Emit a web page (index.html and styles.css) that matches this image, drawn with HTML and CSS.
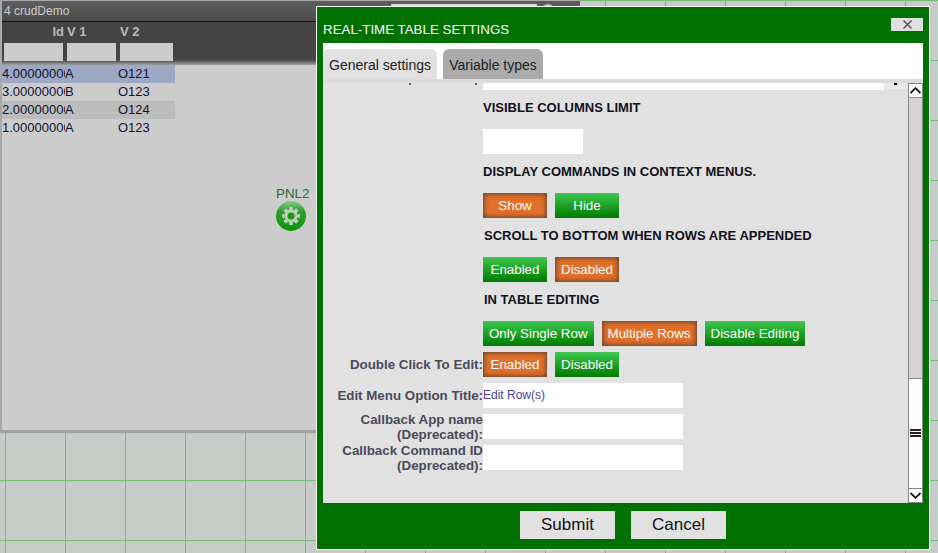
FILE: index.html
```html
<!DOCTYPE html>
<html lang="en">
<head>
    <meta charset="UTF-8">
    <title>crudDemo</title>
    <link rel="stylesheet" href="styles.css">
</head>
<body>
    <div class="app-window">
        <div class="app-title">
            <span class="app-name">4 crudDemo</span>
            <div class="title-field"></div>
            <div class="title-icon"></div>
        </div>
        <div class="table-head">
            <div class="head-cols">
                <div class="head-col col-id">Id</div>
                <div class="head-col col-v1">V 1</div>
                <div class="head-col col-v2">V 2</div>
            </div>
            <div class="head-filters">
                <div class="filter filter-id"></div>
                <div class="filter filter-v1"></div>
                <div class="filter filter-v2"></div>
            </div>
        </div>
        <div class="table-body">
            <div class="row row-selected"><span class="cell-id">4.0000000000</span><span class="cell-v1">A</span><span class="cell-v2">O121</span></div>
            <div class="row"><span class="cell-id">3.0000000000</span><span class="cell-v1">B</span><span class="cell-v2">O123</span></div>
            <div class="row row-alt"><span class="cell-id">2.0000000000</span><span class="cell-v1">A</span><span class="cell-v2">O124</span></div>
            <div class="row"><span class="cell-id">1.0000000000</span><span class="cell-v1">A</span><span class="cell-v2">O123</span></div>
        </div>
        <div class="panel-node">
            <div class="node-label">PNL2</div>
            <svg class="node-icon" width="30" height="30" viewBox="0 0 30 30">
                <defs>
                    <linearGradient id="nodeFill" x1="0" y1="0" x2="0" y2="1">
                        <stop offset="0" stop-color="#86cc86"/>
                        <stop offset="0.35" stop-color="#2c9f2c"/>
                        <stop offset="1" stop-color="#0a960a"/>
                    </linearGradient>
                </defs>
                <circle cx="15" cy="15" r="15" fill="url(#nodeFill)"/>
                <g fill="#bccdbc">
                    <rect x="13.2" y="6" width="3.6" height="18"/>
                    <rect x="13.2" y="6" width="3.6" height="18" transform="rotate(45 15 15)"/>
                    <rect x="13.2" y="6" width="3.6" height="18" transform="rotate(90 15 15)"/>
                    <rect x="13.2" y="6" width="3.6" height="18" transform="rotate(135 15 15)"/>
                </g>
                <circle cx="15" cy="15" r="6.4" fill="#bccdbc"/>
                <circle cx="15" cy="15" r="3.6" fill="#149a14"/>
            </svg>
        </div>
    </div>

    <div class="dialog">
        <div class="dialog-title">
            <span>REAL-TIME TABLE SETTINGS</span>
            <button class="close-btn">
                <svg width="9" height="9" viewBox="0 0 9 9"><path d="M0.5 0.5L8.5 8.5M8.5 0.5L0.5 8.5" stroke="#444" stroke-width="1.2" fill="none"/></svg>
            </button>
        </div>
        <div class="dialog-content">
            <div class="tabs">
                <div class="tab tab-active">General settings</div>
                <div class="tab">Variable types</div>
            </div>
            <div class="tab-line"></div>
            <div class="scroll-area">
                <div class="form">
                    <div class="speck speck-a"></div>
                    <div class="speck speck-b"></div>
                    <div class="cut-row">
                        <div class="cut-input"></div>
                        <div class="cut-end"><div class="cut-dot"></div></div>
                    </div>
                    <div class="section-title">VISIBLE COLUMNS LIMIT</div>
                    <div class="text-input small"></div>
                    <div class="section-title">DISPLAY COMMANDS IN CONTEXT MENUS.</div>
                    <div class="btn-row">
                        <div class="btn btn-on">Show</div>
                        <div class="btn">Hide</div>
                    </div>
                    <div class="section-title indented">SCROLL TO BOTTOM WHEN ROWS ARE APPENDED</div>
                    <div class="btn-row">
                        <div class="btn">Enabled</div>
                        <div class="btn btn-on">Disabled</div>
                    </div>
                    <div class="section-title indented">IN TABLE EDITING</div>
                    <div class="btn-row">
                        <div class="btn btn-wide">Only Single Row</div>
                        <div class="btn btn-on btn-wide">Multiple Rows</div>
                        <div class="btn btn-wide">Disable Editing</div>
                    </div>
                    <div class="field">
                        <label>Double Click To Edit:</label>
                        <div class="btn-row">
                            <div class="btn btn-on">Enabled</div>
                            <div class="btn">Disabled</div>
                        </div>
                    </div>
                    <div class="field">
                        <label>Edit Menu Option Title:</label>
                        <div class="text-input">Edit Row(s)</div>
                    </div>
                    <div class="field">
                        <label>Callback App name<br>(Deprecated):</label>
                        <div class="text-input"></div>
                    </div>
                    <div class="field">
                        <label>Callback Command ID<br>(Deprecated):</label>
                        <div class="text-input"></div>
                    </div>
                </div>
                <div class="scrollbar">
                    <div class="scroll-btn">
                        <svg width="11" height="7" viewBox="0 0 11 7"><path d="M0.5 6L5.5 1.2L10.5 6" stroke="#111" stroke-width="1.8" fill="none"/></svg>
                    </div>
                    <div class="scroll-track"></div>
                    <div class="scroll-thumb">
                        <div class="grip"></div>
                        <div class="grip"></div>
                        <div class="grip"></div>
                    </div>
                    <div class="scroll-btn">
                        <svg width="11" height="7" viewBox="0 0 11 7"><path d="M0.5 1L5.5 5.8L10.5 1" stroke="#111" stroke-width="1.8" fill="none"/></svg>
                    </div>
                </div>
            </div>
        </div>
        <div class="dialog-actions">
            <button class="action-btn">Submit</button>
            <button class="action-btn">Cancel</button>
        </div>
    </div>
</body>
</html>
```

FILE: styles.css
```css
html, body {
    margin: 0;
    height: 100%;
    overflow: hidden;
}
body {
    position: relative;
    font-family: "Liberation Sans", Arial, sans-serif;
    background-color: #c7ccc8;
    background-image:
        linear-gradient(to right, #78bb78 1px, transparent 1px),
        linear-gradient(to bottom, #78bb78 1px, transparent 1px);
    background-size: 60px 60px;
    background-position: 5px 0;
}

/* window behind the dialog */
.app-window {
    position: absolute;
    left: 0;
    top: 0;
    width: 578px;
    height: 429px;
    background: #cccccc;
    border-left: 2px solid #a8a8a8;
    border-top: 1px solid #a8a8a8;
    border-bottom: 3px solid #a0a0a0;
}
.app-title {
    display: flex;
    height: 20px;
    line-height: 20px;
    font-size: 12px;
    color: #cccccc;
    background: linear-gradient(#5e5e5e, #4c4c4c);
    border-bottom: 1px solid #111;
}
.app-name {
    width: 389px;
    padding-left: 2px;
    box-sizing: border-box;
}
.title-field {
    width: 146px;
    height: 14px;
    margin-top: 3px;
    background: #d8d8d8;
}
.title-icon {
    width: 14px;
    height: 14px;
    margin: 3px 0 0 4px;
    border-radius: 50%;
    background: #bbbbbb;
}
.table-head {
    height: 43px;
    background: linear-gradient(#444444 88%, #a0a0a0);
}
.head-cols {
    display: flex;
    height: 21px;
    line-height: 20px;
}
.head-col {
    font-size: 13px;
    font-weight: bold;
    color: #bbbbbb;
}
.col-id {
    width: 62px;
    text-align: right;
}
.col-v1 {
    width: 52px;
    padding-left: 3px;
    box-sizing: border-box;
}
.col-v2 {
    padding-left: 4px;
}
.head-filters {
    display: flex;
    gap: 4px;
    padding-left: 2px;
}
.filter {
    height: 18px;
    background: #cccccc;
}
.filter-id { width: 59px; }
.filter-v1 { width: 49px; }
.filter-v2 { width: 53px; }
.row {
    display: flex;
    width: 173px;
    height: 18px;
    line-height: 18px;
    font-size: 13px;
    color: #111133;
}
.row-selected { background: #9da8c5; }
.row-alt { background: #bcbcbc; }
.cell-id {
    width: 63px;
    overflow: hidden;
    white-space: nowrap;
}
.cell-v1 {
    width: 53px;
}
.panel-node {
    position: absolute;
    left: 274px;
    top: 184px;
    width: 36px;
}
.node-label {
    height: 16px;
    font-size: 13.33px;
    line-height: 18px;
    color: #2d6a2d;
}
.node-icon {
    display: block;
}

/* settings dialog */
.dialog {
    position: absolute;
    left: 316px;
    top: 6px;
    width: 600px;
    height: 542px;
    padding: 0 6px;
    background: #007000;
    border: 1px solid #ffffff;
    display: flex;
    flex-direction: column;
}
.dialog-title {
    height: 36px;
    flex: none;
    display: flex;
    align-items: flex-end;
    justify-content: space-between;
    color: #ffffff;
    font-size: 13.33px;
    line-height: 20px;
}
.dialog-title span {
    padding-bottom: 3px;
}
.close-btn {
    width: 32px;
    height: 13px;
    padding: 0;
    border: none;
    background: #e0e0e0;
    margin-bottom: 12px;
    display: flex;
    align-items: center;
    justify-content: center;
}
.dialog-content {
    height: 460px;
    flex: none;
    background: #e1e1e1;
    display: flex;
    flex-direction: column;
}
.tabs {
    display: flex;
    gap: 6px;
    height: 30px;
    padding-top: 6px;
    background: #ffffff;
}
.tab {
    width: 100px;
    height: 30px;
    line-height: 32px;
    text-align: center;
    font-size: 14px;
    color: #222;
    background: #aaaaaa;
    border-radius: 6px 6px 0 0;
}
.tab-active {
    width: 114px;
    background: #e1e1e1;
}
.tab-line {
    height: 4px;
    background: #dcdcdc;
}
.scroll-area {
    flex: 1;
    display: flex;
    min-height: 0;
}
.form {
    position: relative;
    flex: 1;
    padding-left: 160px;
    overflow: hidden;
}
.speck {
    position: absolute;
    top: 0;
    width: 2px;
    height: 2px;
    background: #4a6a90;
}
.speck-a { left: 86px; }
.speck-b { left: 152px; }
.cut-row {
    display: flex;
    height: 7px;
}
.cut-input {
    width: 401px;
    background: #ffffff;
}
.cut-end {
    width: 23px;
    height: 6px;
    background: #e9e9e9;
}
.cut-dot {
    width: 3px;
    height: 2px;
    margin-left: 10px;
    background: #000;
}
.section-title {
    font-size: 13px;
    font-weight: bold;
    color: #111122;
    line-height: 16px;
    margin: 10px 0 13px 0;
}
.section-title.indented {
    padding-left: 1px;
}
.text-input {
    width: 200px;
    height: 25px;
    line-height: 25px;
    background: #ffffff;
    font-size: 12px;
    color: #4a3fa0;
}
.text-input.small {
    width: 100px;
}
.btn-row {
    display: flex;
    gap: 8px;
}
.btn {
    width: 64px;
    height: 25px;
    line-height: 25px;
    text-align: center;
    font-size: 13.33px;
    color: #ffffff;
    background: linear-gradient(#3ec850, #007a00);
}
.btn-on {
    background: #e2702a;
    box-shadow: inset 0 0 5px 1px #5e4030;
}
.btn-wide {
    width: auto;
    padding: 0 6px;
}
.field {
    display: flex;
    margin-left: -160px;
    margin-top: 6px;
    height: 25px;
}
.field label {
    width: 160px;
    text-align: right;
    font-size: 13.33px;
    font-weight: bold;
    color: #4a4a5a;
    line-height: 15px;
    align-self: center;
}
.scrollbar {
    width: 13px;
    flex: none;
    display: flex;
    flex-direction: column;
    background: #d5d4d2;
    border-left: 1px solid #888;
    border-right: 1px solid #888;
}
.scroll-btn {
    height: 13px;
    background: #fcfcfc;
    border-top: 1px solid #888;
    border-bottom: 1px solid #888;
    display: flex;
    align-items: center;
    justify-content: center;
}
.scroll-track {
    flex: 1;
}
.scroll-thumb {
    height: 108px;
    padding-bottom: 1px;
    background: #fcfcfc;
    border-top: 1px solid #888;
    display: flex;
    flex-direction: column;
    align-items: center;
    justify-content: center;
    gap: 1px;
}
.grip {
    width: 11px;
    height: 2px;
    background: #222;
}
.dialog-actions {
    flex: 1;
    display: flex;
    justify-content: center;
    align-items: flex-start;
    gap: 16px;
    padding-top: 8px;
}
.action-btn {
    width: 95px;
    height: 28px;
    padding: 0;
    border: none;
    background: #e1e1e1;
    font-family: "Liberation Sans", Arial, sans-serif;
    font-size: 17px;
    color: #111;
}
```
